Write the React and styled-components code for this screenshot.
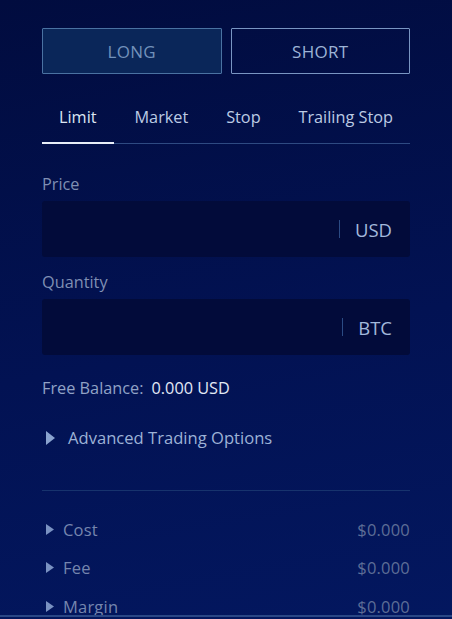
import React, { useState } from "react";
import styled, { createGlobalStyle } from "styled-components";

const Global = createGlobalStyle`
  html, body {
    margin: 0;
    padding: 0;
    height: 100%;
  }
  body {
    background: linear-gradient(170deg, #010c3f 0%, #021253 55%, #03175f 100%);
    font-family: "Open Sans", Lato, sans-serif;
    color: #c3d1ea;
  }
`;

const Page = styled.div`
  width: 368px;
  margin: 0 auto;
  padding-top: 28px;
  min-height: 619px;
  box-sizing: border-box;
`;

const SideRow = styled.div`
  display: flex;
  gap: 9px;
`;

const SideButton = styled.button`
  flex: 1;
  height: 46px;
  font-family: inherit;
  font-size: 17px;
  letter-spacing: 0.3px;
  color: ${(p) => (p.active ? "#7291bb" : "#9db3d6")};
  background: ${(p) => (p.active ? "#0a2659" : "transparent")};
  border: 1px solid ${(p) => (p.active ? "#4a72a2" : "#7995c2")};
  border-radius: 1px;
  cursor: pointer;
`;

const Tabs = styled.div`
  display: flex;
  justify-content: space-between;
  margin-top: 18px;
  border-bottom: 1px solid #2e4a82;
`;

const Tab = styled.div`
  padding: 14px 17px 14px;
  line-height: 22px;
  font-size: 16.3px;
  color: ${(p) => (p.active ? "#dde6f4" : "#bccbe4")};
  border-bottom: 2px solid ${(p) => (p.active ? "#e8eef8" : "transparent")};
  margin-bottom: -1px;
  cursor: pointer;
`;

const Label = styled.div`
  font-size: 16.3px;
  line-height: 20px;
  color: #7f8fb3;
  margin-top: ${(p) => p.top}px;
  margin-bottom: 7px;
`;

const Field = styled.div`
  height: 56px;
  background: #020b3a;
  border-radius: 3px;
  display: flex;
  align-items: center;
  justify-content: flex-end;
  padding-right: 18px;
`;

const Divider = styled.span`
  width: 1px;
  height: 18px;
  background: #2b4b84;
  margin-right: 15px;
`;

const Unit = styled.span`
  font-size: 18.5px;
  color: #a2b9dc;
`;

const Balance = styled.div`
  margin-top: 23px;
  font-size: 16.3px;
  line-height: 20px;
  color: #91a2c6;
  span {
    color: #e2e9f6;
    margin-left: 8px;
  }
`;

const Advanced = styled.div`
  display: flex;
  align-items: center;
  margin-top: 30px;
  font-size: 16.6px;
  line-height: 20px;
  color: #9db2d6;
  svg {
    margin-left: 4px;
    margin-right: 13px;
  }
`;

const Rule = styled.div`
  height: 1px;
  background: #17336d;
  margin-top: 42px;
`;

const Summary = styled.div`
  padding-top: 19px;
`;

const Row = styled.div`
  display: flex;
  align-items: center;
  justify-content: space-between;
  height: 38.5px;
  font-size: 16.5px;
  letter-spacing: 0.2px;
  color: #7383ab;
`;

const RowName = styled.div`
  display: flex;
  align-items: center;
  color: #7585ae;
  svg {
    margin-left: 4px;
    margin-right: 9px;
  }
`;

const Value = styled.div`
  color: #5d6d96;
`;

const Footer = styled.div`
  position: fixed;
  left: 0;
  right: 0;
  bottom: 2px;
  height: 2px;
  background: #2a4785;
`;

const Caret = ({ w = 8, h = 11, color = "#7a92c2" }) => (
  <svg width={w} height={h} viewBox={`0 0 ${w} ${h}`}>
    <polygon points={`0,0 ${w},${h / 2} 0,${h}`} fill={color} />
  </svg>
);

const tabs = ["Limit", "Market", "Stop", "Trailing Stop"];
const rows = ["Cost", "Fee", "Margin"];

export default function App() {
  const [side, setSide] = useState("long");
  const [tab, setTab] = useState("Limit");

  return (
    <>
      <Global />
      <Page>
        <SideRow>
          <SideButton active={side === "long"} onClick={() => setSide("long")}>
            LONG
          </SideButton>
          <SideButton active={side === "short"} onClick={() => setSide("short")}>
            SHORT
          </SideButton>
        </SideRow>

        <Tabs>
          {tabs.map((t) => (
            <Tab key={t} active={tab === t} onClick={() => setTab(t)}>
              {t}
            </Tab>
          ))}
        </Tabs>

        <Label top={30}>Price</Label>
        <Field>
          <Divider />
          <Unit>USD</Unit>
        </Field>

        <Label top={15}>Quantity</Label>
        <Field>
          <Divider />
          <Unit>BTC</Unit>
        </Field>

        <Balance>
          Free Balance:<span>0.000 USD</span>
        </Balance>

        <Advanced>
          <Caret w={9} h={14} color="#8aa3cf" />
          Advanced Trading Options
        </Advanced>

        <Rule />

        <Summary>
          {rows.map((r) => (
            <Row key={r}>
              <RowName>
                <Caret />
                {r}
              </RowName>
              <Value>$0.000</Value>
            </Row>
          ))}
        </Summary>
      </Page>
      <Footer />
    </>
  );
}
